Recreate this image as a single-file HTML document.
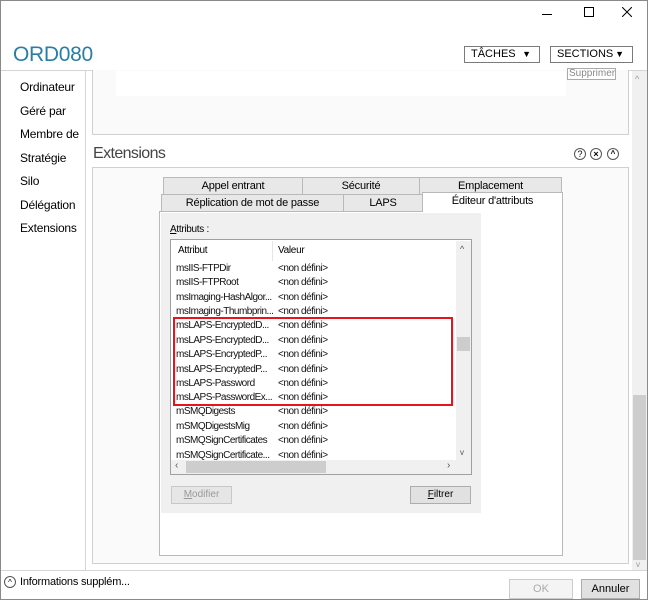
<!DOCTYPE html>
<html><head><meta charset="utf-8"><style>
*{margin:0;padding:0;box-sizing:border-box}
body{width:648px;height:600px;overflow:hidden;background:#fff;font-family:"Liberation Sans",sans-serif;color:#000;position:relative}
.a{position:absolute}
.win{left:0;top:0;width:648px;height:600px;border:1px solid #8a8a8a}
.nav{font-size:12px;left:20px;letter-spacing:-0.2px}
.btnh{border:1px solid #7a7a7a;font-size:11px;height:17px;line-height:15px;padding-left:6px;background:#fff}
.tab{background:#e8e8e8;border:1px solid #b9b9b9;font-size:11px;text-align:center;height:18px;line-height:16px;letter-spacing:-0.2px}
.row{left:176px;font-size:10px;letter-spacing:-0.5px;color:#111;white-space:nowrap}
.val{left:278px;font-size:10px;letter-spacing:-0.45px;color:#111}
.ic{width:12px;height:12px;border:1px solid #555;border-radius:50%;font-size:9px;line-height:10px;text-align:center;font-weight:bold}
</style></head><body>
<div class="a win"></div>
<div class="a" style="left:542px;top:14px;width:10px;height:1px;background:#000"></div>
<div class="a" style="left:584px;top:7px;width:10px;height:10px;border:1px solid #000"></div>
<svg class="a" style="left:622px;top:7px" width="10" height="10"><path d="M0 0L10 10M10 0L0 10" stroke="#000" stroke-width="1"/></svg>
<div class="a" style="left:13px;top:43px;font-size:21px;color:#2a7ea6;letter-spacing:-0.3px">ORD080</div>
<div class="a btnh" style="left:464px;top:46px;width:76px">TÂCHES<span style="position:absolute;right:8px;font-size:9px">▼</span></div>
<div class="a btnh" style="left:550px;top:46px;width:83px">SECTIONS<span style="position:absolute;right:8px;font-size:9px">▼</span></div>
<div class="a" style="left:1px;top:70px;width:646px;height:1px;background:#d4d4d4"></div>
<div class="a" style="left:85px;top:71px;width:1px;height:499px;background:#d4d4d4"></div>
<div class="a nav" style="top:80px">Ordinateur</div>
<div class="a nav" style="top:104px">Géré par</div>
<div class="a nav" style="top:127px">Membre de</div>
<div class="a nav" style="top:151px">Stratégie</div>
<div class="a nav" style="top:174px">Silo</div>
<div class="a nav" style="top:198px">Délégation</div>
<div class="a nav" style="top:221px">Extensions</div>
<div class="a" style="left:92px;top:70px;width:537px;height:65px;border:1px solid #d0d0d0;border-top:none;background:#fafafa"></div>
<div class="a" style="left:116px;top:71px;width:450px;height:25px;background:#fff"></div>
<div class="a" style="left:567px;top:68px;width:49px;height:12px;border:1px solid #aaa;font-size:10px;color:#888;line-height:9px;padding-left:1px;background:#fff">Supprimer</div>
<div class="a" style="left:632px;top:71px;width:15px;height:499px;background:#f0f0f0"></div>
<div class="a" style="left:633px;top:395px;width:13px;height:165px;background:#cdcdcd"></div>
<div class="a" style="left:635px;top:74px;font-size:9px;color:#999">^</div>
<div class="a" style="left:636px;top:560px;font-size:8px;color:#999">v</div>
<div class="a" style="left:93px;top:145px;font-size:16px;color:#444;letter-spacing:-0.6px">Extensions</div>
<div class="a ic" style="left:574px;top:148px;font-weight:normal">?</div>
<div class="a ic" style="left:590px;top:148px">×</div>
<div class="a ic" style="left:607px;top:148px;font-size:8px">^</div>
<div class="a" style="left:92px;top:167px;width:537px;height:397px;border:1px solid #d0d0d0;background:#fafafa"></div>
<div class="a tab" style="left:163px;top:177px;width:140px">Appel entrant</div>
<div class="a tab" style="left:302px;top:177px;width:118px">Sécurité</div>
<div class="a tab" style="left:419px;top:177px;width:143px">Emplacement</div>
<div class="a tab" style="left:161px;top:194px;width:183px">Réplication de mot de passe</div>
<div class="a tab" style="left:343px;top:194px;width:80px">LAPS</div>
<div class="a" style="left:159px;top:211px;width:404px;height:345px;border:1px solid #b9b9b9;background:#fff"></div>
<div class="a tab" style="left:422px;top:192px;width:141px;height:20px;background:#fff;border-bottom:none">Éditeur d'attributs</div>
<div class="a" style="left:161px;top:213px;width:320px;height:300px;background:#f0f0f0"></div>
<div class="a" style="left:170px;top:224px;font-size:10px;letter-spacing:-0.3px"><u>A</u>ttributs :</div>
<div class="a" style="left:170px;top:239px;width:302px;height:236px;border:1px solid #a0a0a0;background:#fff"></div>
<div class="a" style="left:178px;top:245px;font-size:10px;letter-spacing:-0.3px">Attribut</div>
<div class="a" style="left:272px;top:241px;width:1px;height:20px;background:#e5e5e5"></div>
<div class="a" style="left:278px;top:245px;font-size:10px;letter-spacing:-0.3px">Valeur</div>
<div class="a row" style="top:263px">msIIS-FTPDir</div><div class="a val" style="top:263px">&lt;non défini&gt;</div>
<div class="a row" style="top:277px">msIIS-FTPRoot</div><div class="a val" style="top:277px">&lt;non défini&gt;</div>
<div class="a row" style="top:292px">msImaging-HashAlgor...</div><div class="a val" style="top:292px">&lt;non défini&gt;</div>
<div class="a row" style="top:306px">msImaging-Thumbprin...</div><div class="a val" style="top:306px">&lt;non défini&gt;</div>
<div class="a row" style="top:320px">msLAPS-EncryptedD...</div><div class="a val" style="top:320px">&lt;non défini&gt;</div>
<div class="a row" style="top:335px">msLAPS-EncryptedD...</div><div class="a val" style="top:335px">&lt;non défini&gt;</div>
<div class="a row" style="top:349px">msLAPS-EncryptedP...</div><div class="a val" style="top:349px">&lt;non défini&gt;</div>
<div class="a row" style="top:364px">msLAPS-EncryptedP...</div><div class="a val" style="top:364px">&lt;non défini&gt;</div>
<div class="a row" style="top:378px">msLAPS-Password</div><div class="a val" style="top:378px">&lt;non défini&gt;</div>
<div class="a row" style="top:392px">msLAPS-PasswordEx...</div><div class="a val" style="top:392px">&lt;non défini&gt;</div>
<div class="a row" style="top:406px">mSMQDigests</div><div class="a val" style="top:406px">&lt;non défini&gt;</div>
<div class="a row" style="top:421px">mSMQDigestsMig</div><div class="a val" style="top:421px">&lt;non défini&gt;</div>
<div class="a row" style="top:435px">mSMQSignCertificates</div><div class="a val" style="top:435px">&lt;non défini&gt;</div>
<div class="a" style="left:171px;top:448px;width:284px;height:12px;overflow:hidden"><div class="a row" style="left:5px;top:2px">mSMQSignCertificate...</div><div class="a val" style="left:107px;top:2px">&lt;non défini&gt;</div></div>
<div class="a" style="left:173px;top:317px;width:280px;height:89px;border:2px solid #e8141b"></div>
<div class="a" style="left:456px;top:241px;width:15px;height:219px;background:#f0f0f0"></div>
<div class="a" style="left:457px;top:337px;width:13px;height:14px;background:#cdcdcd"></div>
<div class="a" style="left:460px;top:244px;font-size:9px;color:#555">^</div>
<div class="a" style="left:460px;top:448px;font-size:8px;color:#555">v</div>
<div class="a" style="left:171px;top:460px;width:300px;height:14px;background:#f0f0f0"></div>
<div class="a" style="left:186px;top:461px;width:140px;height:12px;background:#cdcdcd"></div>
<div class="a" style="left:175px;top:460px;font-size:10px;color:#555">‹</div>
<div class="a" style="left:447px;top:460px;font-size:10px;color:#555">›</div>
<div class="a" style="left:171px;top:486px;width:61px;height:18px;border:1px solid #c8c8c8;background:#e6e6e6;font-size:10px;color:#999;text-align:center;line-height:16px"><u>M</u>odifier</div>
<div class="a" style="left:410px;top:486px;width:61px;height:18px;border:1px solid #adadad;background:#e1e1e1;font-size:10px;text-align:center;line-height:16px"><u>F</u>iltrer</div>
<div class="a" style="left:1px;top:570px;width:646px;height:1px;background:#d4d4d4"></div>
<div class="a ic" style="left:4px;top:576px;font-weight:normal;font-size:8px;line-height:11px">^</div>
<div class="a" style="left:20px;top:576px;font-size:11px;letter-spacing:-0.2px">Informations supplém...</div>
<div class="a" style="left:509px;top:579px;width:64px;height:20px;border:1px solid #ccc;background:#f4f4f4;font-size:11px;color:#aaa;text-align:center;line-height:18px">OK</div>
<div class="a" style="left:581px;top:579px;width:59px;height:20px;border:1px solid #adadad;background:#e1e1e1;font-size:11px;text-align:center;line-height:18px">Annuler</div>
</body></html>
